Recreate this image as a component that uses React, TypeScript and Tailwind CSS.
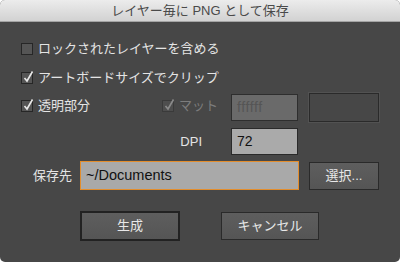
import React from "react";

const FONT = '"Liberation Sans", "Noto Sans CJK JP", sans-serif';

function Check({ checked, disabled }: { checked?: boolean; disabled?: boolean }) {
  return (
    <div
      className={`relative w-[12px] h-[12px] border ${
        disabled ? "border-[#3a3a3a] bg-[#4e4e4e]" : "border-[#262626] bg-[#555555]"
      } shrink-0`}
    >
      {checked && (
        <svg
          className="absolute left-[0px] top-[-3px]"
          width="13"
          height="14"
          viewBox="0 0 13 14"
        >
          <path
            d="M2.5 8 L5 11 L10.5 1.5"
            fill="none"
            stroke={disabled ? "#8a8a8a" : "#e8e8e8"}
            strokeWidth="1.6"
          />
        </svg>
      )}
    </div>
  );
}

export default function App() {
  return (
    <div className="w-[400px] h-[262px] bg-white" style={{ fontFamily: FONT }}>
      <div className="w-[400px] h-[262px] rounded-[5px] overflow-hidden bg-[#474747] flex flex-col">
        <div className="h-[22px] shrink-0 bg-gradient-to-b from-[#ececec] to-[#d2d2d2] border-b border-[#a4a4a4] flex items-center justify-center text-[13px] text-[#4a4a4a]">
          レイヤー毎に PNG として保存
        </div>
        <div className="flex flex-col pl-[21px] pt-[12px] text-[13px] text-[#e4e4e4]">
          <div className="h-[29px] flex items-center gap-[5px]">
            <Check />
            <span>ロックされたレイヤーを含める</span>
          </div>
          <div className="h-[29px] flex items-center gap-[5px]">
            <Check checked />
            <span>アートボードサイズでクリップ</span>
          </div>
          <div className="h-[29px] mt-[1px] flex items-center">
            <div className="w-[141px] flex items-center gap-[5px] mb-[4px]">
              <Check checked />
              <span>透明部分</span>
            </div>
            <div className="w-[69px] flex items-center gap-[5px] mb-[4px]">
              <Check checked disabled />
              <span className="text-[#7c7c7c]">マット</span>
            </div>
            <div className="w-[67px] h-[27px] bg-[#6a6a6a] border border-[#2e2e2e] flex items-center pl-[5px] text-[14px] text-[#555555] tracking-[0.6px]">
              ffffff
            </div>
            <div className="ml-[11px] w-[70px] h-[29px] border border-[#2a2a2a] bg-[#474747] shadow-[0_0_0_1px_#525252]" />
          </div>
          <div className="h-[27px] mt-[6px] flex items-center">
            <span className="w-[210px] text-right pr-[29px]">DPI</span>
            <div className="w-[67px] h-[27px] bg-[#aaaaaa] border border-[#2a2a2a] flex items-center pl-[5px] text-[14px] text-[#111111]">
              72
            </div>
          </div>
          <div className="h-[29px] mt-[6px] flex items-center">
            <span className="w-[59px] text-right pr-[8px]">保存先</span>
            <div className="w-[219px] h-[29px] bg-[#a9a9a9] border border-[#e38d2c] flex items-center pl-[5px] text-[14.5px] text-[#111111]">
              ~/Documents
            </div>
            <div className="ml-[10px] w-[70px] h-[28px] bg-gradient-to-b from-[#5e5e5e] to-[#555555] border border-[#2a2a2a] flex items-center justify-center text-[13px] text-[#e8e8e8]">
              選択...
            </div>
          </div>
          <div className="mt-[21px] flex items-center">
            <div className="ml-[59px] w-[100px] h-[30px] bg-gradient-to-b from-[#5e5e5e] to-[#555555] border-[2px] border-[#222222] flex items-center justify-center text-[13px] text-[#e8e8e8]">
              生成
            </div>
            <div className="ml-[41px] w-[98px] h-[28px] bg-gradient-to-b from-[#5e5e5e] to-[#555555] border border-[#2a2a2a] flex items-center justify-center text-[13px] text-[#e8e8e8]">
              キャンセル
            </div>
          </div>
        </div>
      </div>
    </div>
  );
}
